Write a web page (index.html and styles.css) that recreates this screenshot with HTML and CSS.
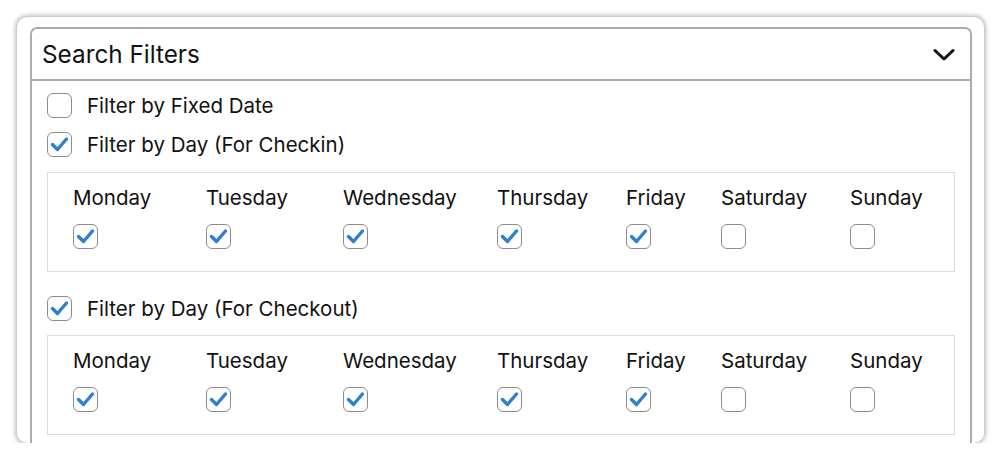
FILE: index.html
```html
<!DOCTYPE html>
<html>
<head>
<meta charset="utf-8">
<link rel="stylesheet" href="styles.css">
</head>
<body>
<div class="card">
  <div class="panel">
    <div class="header">
      <span class="title">Search Filters</span>
      <svg class="chevron" width="22" height="14" viewBox="0 0 22 14"><polyline points="2,2.5 11,11 20,2.5" fill="none" stroke="#111" stroke-width="3" stroke-linecap="round" stroke-linejoin="round"/></svg>
    </div>
    <div class="body">
      <label class="row"><span class="cb"></span><span class="lbl">Filter by Fixed Date</span></label>
      <label class="row"><span class="cb checked"><svg viewBox="0 0 25 25"><polyline points="5.5,12.5 10.5,17.5 19.5,7" fill="none" stroke="#2f7ed3" stroke-width="3.4" stroke-linecap="round" stroke-linejoin="round"/></svg></span><span class="lbl">Filter by Day (For Checkin)</span></label>
      <div class="days">
        <div class="day"><span class="dl">Monday</span><span class="cb checked"><svg viewBox="0 0 25 25"><polyline points="5.5,12.5 10.5,17.5 19.5,7" fill="none" stroke="#2f7ed3" stroke-width="3.4" stroke-linecap="round" stroke-linejoin="round"/></svg></span></div>
        <div class="day"><span class="dl">Tuesday</span><span class="cb checked"><svg viewBox="0 0 25 25"><polyline points="5.5,12.5 10.5,17.5 19.5,7" fill="none" stroke="#2f7ed3" stroke-width="3.4" stroke-linecap="round" stroke-linejoin="round"/></svg></span></div>
        <div class="day"><span class="dl">Wednesday</span><span class="cb checked"><svg viewBox="0 0 25 25"><polyline points="5.5,12.5 10.5,17.5 19.5,7" fill="none" stroke="#2f7ed3" stroke-width="3.4" stroke-linecap="round" stroke-linejoin="round"/></svg></span></div>
        <div class="day"><span class="dl">Thursday</span><span class="cb checked"><svg viewBox="0 0 25 25"><polyline points="5.5,12.5 10.5,17.5 19.5,7" fill="none" stroke="#2f7ed3" stroke-width="3.4" stroke-linecap="round" stroke-linejoin="round"/></svg></span></div>
        <div class="day"><span class="dl">Friday</span><span class="cb checked"><svg viewBox="0 0 25 25"><polyline points="5.5,12.5 10.5,17.5 19.5,7" fill="none" stroke="#2f7ed3" stroke-width="3.4" stroke-linecap="round" stroke-linejoin="round"/></svg></span></div>
        <div class="day"><span class="dl">Saturday</span><span class="cb"></span></div>
        <div class="day"><span class="dl">Sunday</span><span class="cb"></span></div>
      </div>
      <label class="row row3"><span class="cb checked"><svg viewBox="0 0 25 25"><polyline points="5.5,12.5 10.5,17.5 19.5,7" fill="none" stroke="#2f7ed3" stroke-width="3.4" stroke-linecap="round" stroke-linejoin="round"/></svg></span><span class="lbl">Filter by Day (For Checkout)</span></label>
      <div class="days">
        <div class="day"><span class="dl">Monday</span><span class="cb checked"><svg viewBox="0 0 25 25"><polyline points="5.5,12.5 10.5,17.5 19.5,7" fill="none" stroke="#2f7ed3" stroke-width="3.4" stroke-linecap="round" stroke-linejoin="round"/></svg></span></div>
        <div class="day"><span class="dl">Tuesday</span><span class="cb checked"><svg viewBox="0 0 25 25"><polyline points="5.5,12.5 10.5,17.5 19.5,7" fill="none" stroke="#2f7ed3" stroke-width="3.4" stroke-linecap="round" stroke-linejoin="round"/></svg></span></div>
        <div class="day"><span class="dl">Wednesday</span><span class="cb checked"><svg viewBox="0 0 25 25"><polyline points="5.5,12.5 10.5,17.5 19.5,7" fill="none" stroke="#2f7ed3" stroke-width="3.4" stroke-linecap="round" stroke-linejoin="round"/></svg></span></div>
        <div class="day"><span class="dl">Thursday</span><span class="cb checked"><svg viewBox="0 0 25 25"><polyline points="5.5,12.5 10.5,17.5 19.5,7" fill="none" stroke="#2f7ed3" stroke-width="3.4" stroke-linecap="round" stroke-linejoin="round"/></svg></span></div>
        <div class="day"><span class="dl">Friday</span><span class="cb checked"><svg viewBox="0 0 25 25"><polyline points="5.5,12.5 10.5,17.5 19.5,7" fill="none" stroke="#2f7ed3" stroke-width="3.4" stroke-linecap="round" stroke-linejoin="round"/></svg></span></div>
        <div class="day"><span class="dl">Saturday</span><span class="cb"></span></div>
        <div class="day"><span class="dl">Sunday</span><span class="cb"></span></div>
      </div>
    </div>
  </div>
</div>
</body>
</html>
```
FILE: styles.css
```css
* { box-sizing: border-box; }
html, body { margin: 0; padding: 0; background: #fff; }
body {
  font-family: Inter, "Liberation Sans", Arial, sans-serif;
  color: #111;
}
.card {
  margin: 17px 0 0 17px;
  width: 967px;
  height: 426px;
  border-radius: 10px;
  background: #fff;
  box-shadow: 0 0 5px 1px rgba(0,0,0,0.35);
  overflow: hidden;
  padding: 10px 12px 0 13px;
}
.panel {
  border: 2px solid #ababab;
  border-radius: 7px;
  height: 440px;
}
.header {
  height: 52px;
  border-bottom: 2px solid #ababab;
  display: flex;
  align-items: center;
  justify-content: space-between;
  padding: 0 15px 0 10px;
}
.title {
  font-size: 24.3px;
}
.chevron { display: block; margin-top: 2px; }
.body {
  padding: 12px 15px 0 15px;
  display: flex;
  flex-direction: column;
}
.row {
  display: flex;
  align-items: center;
  height: 25px;
  margin-bottom: 14px;
}
.row3 { margin-top: 24px; margin-bottom: 13px; }
.lbl {
  font-size: 20.5px;
  margin-left: 15px;
}
.cb {
  width: 25px;
  height: 25px;
  border: 1.5px solid #8c8c8c;
  border-radius: 6px;
  background: #fff;
  display: block;
  flex: none;
  position: relative;
}
.cb svg {
  position: absolute;
  left: -1.5px;
  top: -1.5px;
  width: 25px;
  height: 25px;
}
.days {
  margin-top: 1px;
  border: 1.5px solid #dcdcdc;
  height: 100px;
  display: grid;
  grid-template-columns: 133px 137px 154px 129px 95px 129px 1fr;
  padding: 13px 0 0 25px;
}
.day {
  display: flex;
  flex-direction: column;
  align-items: flex-start;
}
.dl {
  font-size: 20.5px;
  line-height: 24px;
  height: 24px;
  margin-bottom: 14px;
}
```
